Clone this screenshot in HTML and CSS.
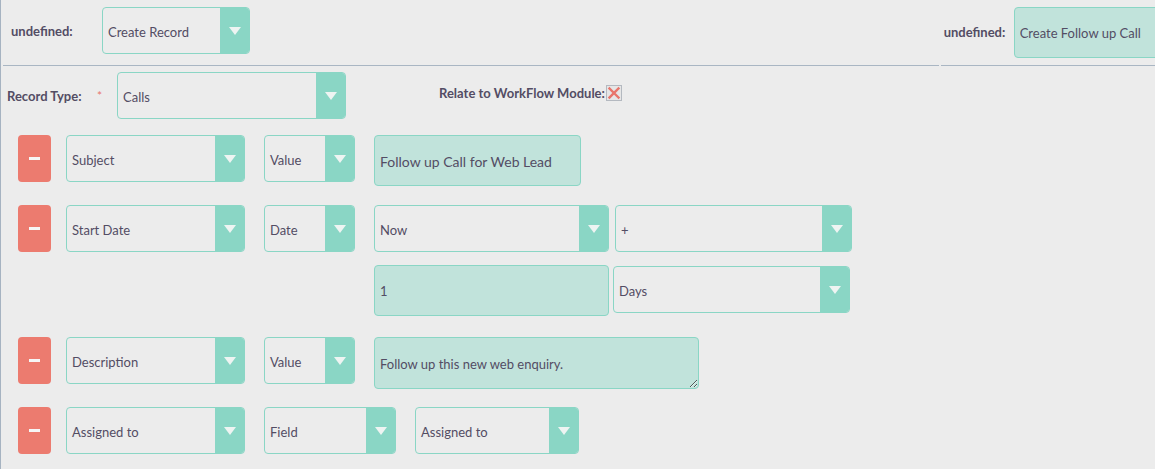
FILE: index.html
```html
<!DOCTYPE html>
<html lang="en">
<head>
<meta charset="utf-8">
<title>Workflow Action</title>
<link rel="stylesheet" href="styles.css">
</head>
<body>
<div class="panel">
  <div class="head">
    <div class="head-cell head-left">
      <span class="lbl lbl-top">undefined:</span>
      <div class="sel w-create"><span class="sel-text">Create Record</span><span class="arr"></span></div>
    </div>
    <div class="head-cell head-right">
      <span class="lbl lbl-right">undefined:</span>
      <input class="inp w-name" type="text" value="Create Follow up Call">
    </div>
  </div>

  <div class="type-row">
    <span class="lbl lbl-type">Record Type:</span>
    <span class="req">*</span>
    <div class="sel w-calls"><span class="sel-text">Calls</span><span class="arr"></span></div>
    <div class="relate">
      <span class="lbl">Relate to WorkFlow Module:</span>
      <span class="chk">
        <svg width="14" height="14" viewBox="0 0 14 14"><path d="M2.5 2.5 L11.5 11.5 M11.5 2.5 L2.5 11.5" stroke="#e8756b" stroke-width="2.4" stroke-linecap="square"/></svg>
      </span>
    </div>
  </div>

  <div class="rows">
    <div class="row row-1">
      <button class="del" type="button"><span class="bar"></span></button>
      <div class="sel w-field"><span class="sel-text">Subject</span><span class="arr"></span></div>
      <div class="sel w-type"><span class="sel-text">Value</span><span class="arr"></span></div>
      <input class="inp w-subject" type="text" value="Follow up Call for Web Lead">
    </div>

    <div class="row row-2">
      <button class="del" type="button"><span class="bar"></span></button>
      <div class="sel w-field"><span class="sel-text">Start Date</span><span class="arr"></span></div>
      <div class="sel w-type"><span class="sel-text">Date</span><span class="arr"></span></div>
      <div class="date-group">
        <div class="sel w-now"><span class="sel-text">Now</span><span class="arr"></span></div>
        <div class="sel w-op"><span class="sel-text">+</span><span class="arr"></span></div>
      </div>
    </div>

    <div class="row sub-row">
      <input class="inp w-amount" type="text" value="1">
      <div class="sel w-unit"><span class="sel-text">Days</span><span class="arr"></span></div>
    </div>

    <div class="row row-4">
      <button class="del" type="button"><span class="bar"></span></button>
      <div class="sel w-field"><span class="sel-text">Description</span><span class="arr"></span></div>
      <div class="sel w-type"><span class="sel-text">Value</span><span class="arr"></span></div>
      <textarea class="area">Follow up this new web enquiry.</textarea>
    </div>

    <div class="row row-5">
      <button class="del" type="button"><span class="bar"></span></button>
      <div class="sel w-field"><span class="sel-text">Assigned to</span><span class="arr"></span></div>
      <div class="sel w-fieldtype"><span class="sel-text">Field</span><span class="arr"></span></div>
      <div class="sel w-assign"><span class="sel-text">Assigned to</span><span class="arr"></span></div>
    </div>
  </div>
</div>
</body>
</html>
```

FILE: styles.css
```css
* { box-sizing: border-box; }

html, body {
  margin: 0;
  padding: 0;
  background: #ececec;
  overflow: hidden;
}

body {
  font-family: Lato, "Open Sans", sans-serif;
  color: #534d64;
  font-size: 13px;
}

.panel {
  border-left: 1px solid #a6b3c1;
  min-height: 469px;
  width: 1200px;
}

/* header */
.head {
  display: flex;
  gap: 2px;
  padding-left: 2px;
}

.head-cell {
  display: flex;
  align-items: flex-start;
  height: 66px;
  border-bottom: 1px solid #a9b6c3;
  padding-top: 7px;
}

.head-left {
  width: 938px;
  padding-left: 8px;
}

.head-right {
  width: 260px;
  padding-left: 3px;
}

.lbl {
  font-weight: bold;
  font-size: 13px;
  color: #534d64;
  white-space: nowrap;
}

.lbl-top {
  width: 91px;
  padding-top: 2px;
  line-height: 45px;
}

.lbl-right {
  width: 70px;
  line-height: 51px;
}

/* select look-alike */
.sel {
  display: flex;
  height: 47px;
  border: 1px solid #8ad6c5;
  border-radius: 4px;
  overflow: hidden;
  background: #ececec;
  flex: none;
}

.sel-text {
  flex: 1;
  padding-left: 5px;
  padding-top: 4px;
  line-height: 41px;
  white-space: nowrap;
  overflow: hidden;
}

.arr {
  width: 29px;
  background: #8ad6c5;
  display: flex;
  align-items: center;
  justify-content: center;
  flex: none;
}

.arr::after {
  content: "";
  width: 0;
  height: 0;
  border-left: 6px solid transparent;
  border-right: 6px solid transparent;
  border-top: 8px solid #eef4f2;
}

/* text inputs */
.inp, .area {
  font-family: Lato, "Open Sans", sans-serif;
  font-size: 13px;
  color: #534d64;
  background: #c1e3db;
  border: 1px solid #8ad6c5;
  border-radius: 4px;
  padding: 1px 5px 0;
  height: 51px;
  outline: none;
  flex: none;
  margin: 0;
}

.area {
  resize: vertical;
  height: 52px;
  width: 325px;
  padding-top: 17px;
  line-height: 18px;
  overflow: hidden;
}

.w-create { width: 148px; }
.w-name { width: 160px; }
.w-calls { width: 229px; }
.w-field { width: 179px; }
.w-type { width: 91px; }
.w-subject { width: 207px; font-size: 14px; }
.w-now { width: 235px; }
.w-op { width: 237px; }
.w-amount { width: 235px; }
.w-unit { width: 237px; margin-top: 1px; }
.w-fieldtype { width: 132px; }
.w-assign { width: 164px; }

/* record type row */
.type-row {
  display: flex;
  align-items: flex-start;
  padding-top: 6px;
  padding-left: 6px;
}

.lbl-type {
  width: 90px;
  padding-top: 2px;
  line-height: 45px;
}

.req {
  color: #e8756b;
  font-size: 12px;
  width: 20px;
  padding-top: 3px;
  line-height: 42px;
}

.relate {
  display: flex;
  align-items: center;
  margin-left: 93px;
  margin-top: 12px;
  gap: 1px;
}

.chk {
  width: 16px;
  height: 16px;
  border: 1px solid #b4b9c0;
  background: #e6e6e6;
  display: flex;
  align-items: center;
  justify-content: center;
  margin-top: 1px;
}

.chk svg { display: block; }

/* action rows */
.rows {
  padding-left: 17px;
}

.row {
  display: flex;
  align-items: flex-start;
  gap: 19px;
}

.row-1 { margin-top: 16px; }
.row-2 { margin-top: 19px; }
.sub-row { margin-top: 13px; margin-left: 356px; gap: 4px; }
.row-4 { margin-top: 21px; }
.row-5 { margin-top: 18px; }

.del {
  width: 33px;
  height: 47px;
  background: #ec7b6f;
  border: none;
  border-radius: 4px;
  padding: 0;
  margin-right: -4px;
  display: flex;
  align-items: center;
  justify-content: center;
  flex: none;
}

.bar {
  width: 11px;
  height: 3px;
  background: #f6f6f6;
}

.date-group {
  display: flex;
  gap: 6px;
}
```
